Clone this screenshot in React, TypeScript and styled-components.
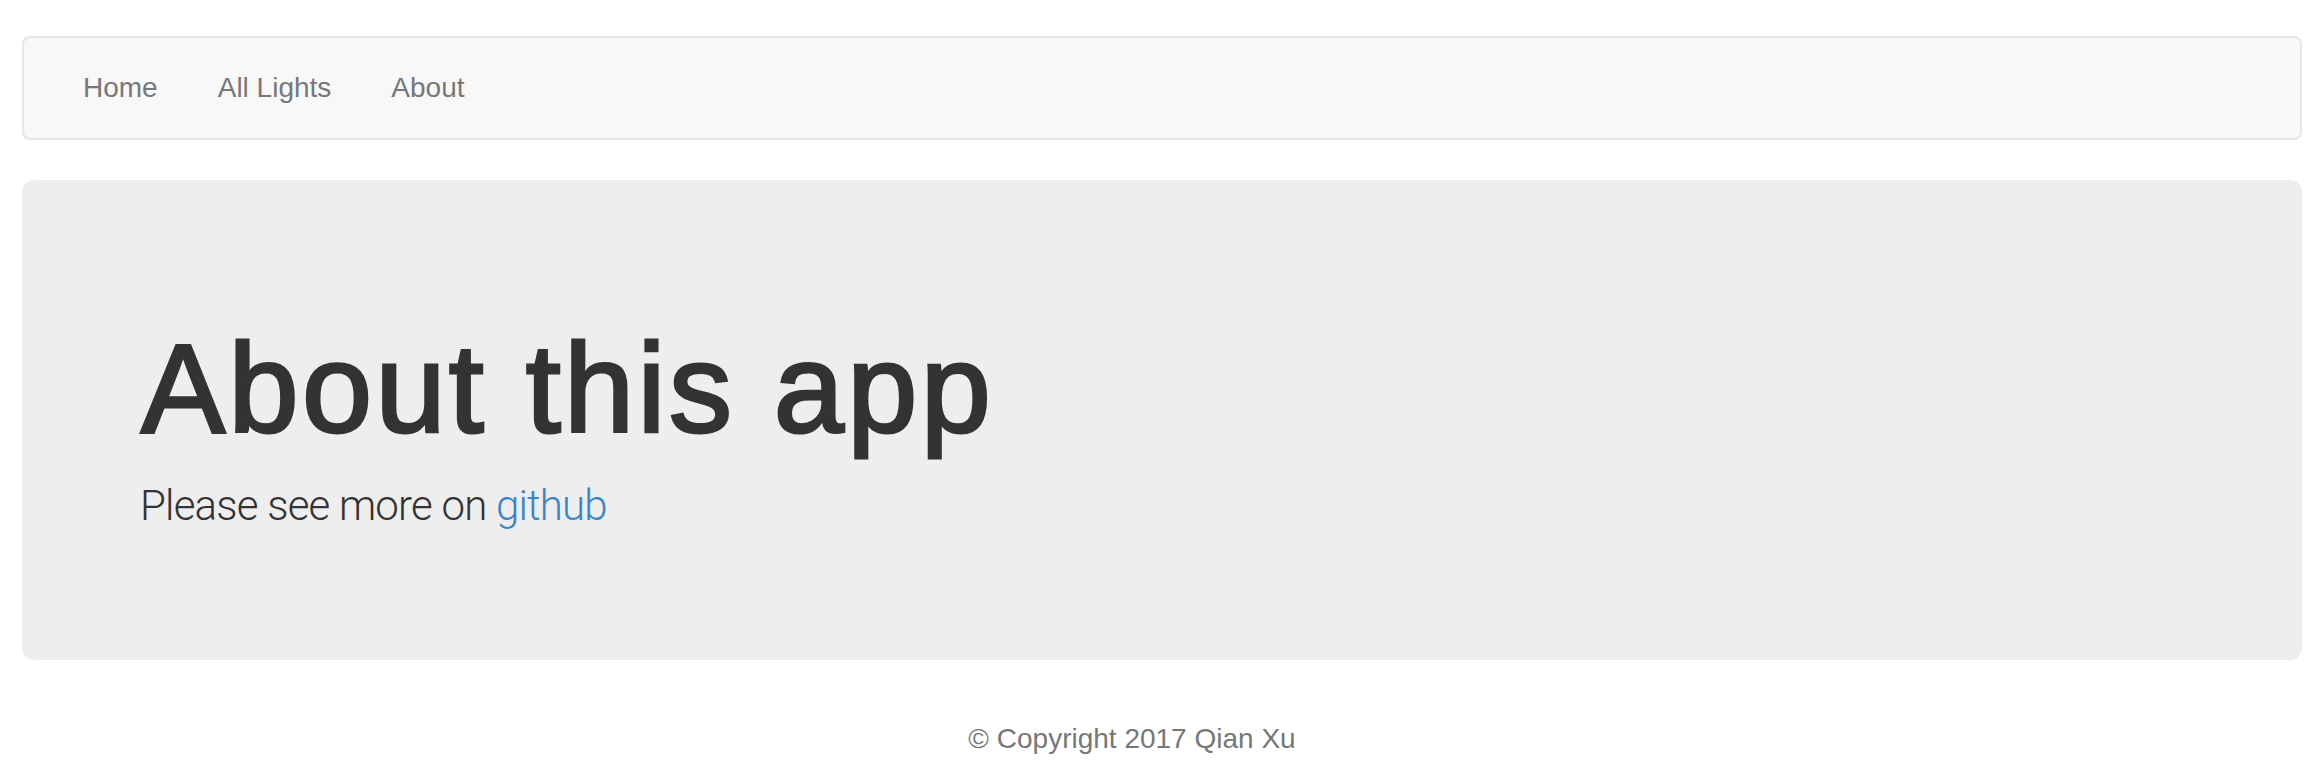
import React from "react";
import styled, { createGlobalStyle } from "styled-components";

const GlobalStyle = createGlobalStyle`
  html, body {
    margin: 0;
    padding: 0;
    background: #ffffff;
    font-family: "Liberation Sans", Arial, sans-serif;
    color: #333333;
  }
`;

const Page = styled.div`
  display: flex;
  flex-direction: column;
  padding: 36px 20px 0 22px;
`;

const Navbar = styled.nav`
  display: flex;
  align-items: center;
  height: 104px;
  box-sizing: border-box;
  padding: 0 29px;
  background: #f8f8f8;
  border: 2px solid #e7e7e7;
  border-radius: 8px;
`;

const NavList = styled.ul`
  display: flex;
  margin: 0;
  padding: 0;
  list-style: none;
`;

const NavLink = styled.a`
  display: block;
  padding: 30px;
  font-size: 28px;
  line-height: 40px;
  color: #777777;
  text-decoration: none;
  cursor: pointer;
`;

const Jumbotron = styled.section`
  margin-top: 40px;
  padding: 139px 118px 125px;
  background: #eeeeee;
  border-radius: 12px;
`;

const Title = styled.h1`
  margin: 0;
  padding-left: 1px;
  font-family: "Liberation Sans", Arial, sans-serif;
  font-weight: 400;
  font-size: 126px;
  line-height: 139px;
  letter-spacing: 3.4px;
  color: #333333;
  -webkit-text-stroke: 3px #333333;
`;

const Lead = styled.p`
  margin: 18px 0 0;
  font-family: Roboto, "Liberation Sans", sans-serif;
  font-weight: 300;
  font-size: 42px;
  line-height: 59px;
  letter-spacing: -0.8px;
  color: #333333;
`;

const Link = styled.a`
  color: #3a84cc;
  text-decoration: none;
`;

const Footer = styled.footer`
  margin-top: 59px;
  padding-right: 60px;
  text-align: center;
  font-size: 28px;
  line-height: 40px;
  color: #777777;
`;

const links = ["Home", "All Lights", "About"];

export default function App() {
  return (
    <>
      <GlobalStyle />
      <Page>
        <Navbar>
          <NavList>
            {links.map((l) => (
              <li key={l}>
                <NavLink>{l}</NavLink>
              </li>
            ))}
          </NavList>
        </Navbar>
        <Jumbotron>
          <Title>About this app</Title>
          <Lead>
            Please see more on <Link href="#">github</Link>
          </Lead>
        </Jumbotron>
        <Footer>© Copyright 2017 Qian Xu</Footer>
      </Page>
    </>
  );
}
